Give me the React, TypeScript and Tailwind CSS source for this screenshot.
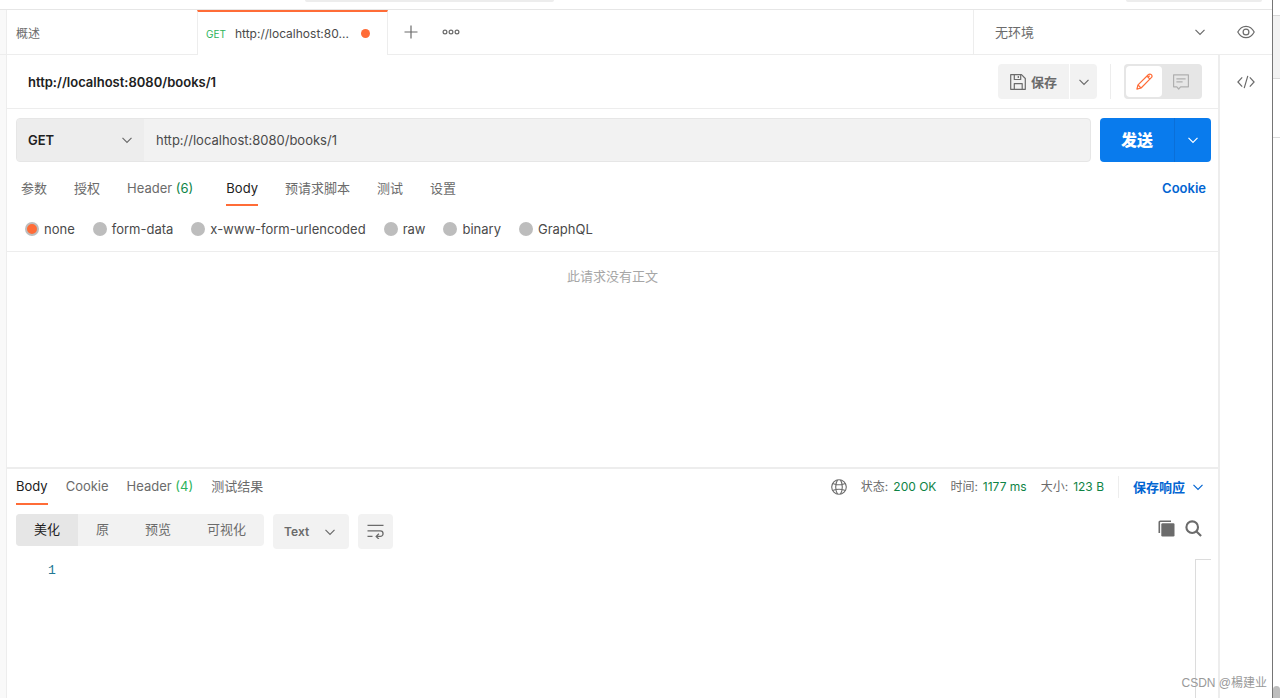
import { useState } from "react";
import type { ReactNode } from "react";

type IconProps = { className?: string };

function Chevron({ className }: IconProps) {
  return (
    <svg className={className} width="12" height="12" viewBox="0 0 12 12" fill="none" stroke="currentColor" strokeWidth="1.2" aria-hidden="true">
      <path d="M1.5 3.8 6 8.3l4.5-4.5" />
    </svg>
  );
}

function PlusIcon() {
  return (
    <svg width="14" height="14" viewBox="0 0 14 14" fill="none" stroke="currentColor" strokeWidth="1.2" aria-hidden="true">
      <path d="M7 .5v13M.5 7h13" />
    </svg>
  );
}

function MoreIcon() {
  return (
    <svg width="18" height="6" viewBox="0 0 18 6" fill="none" stroke="currentColor" strokeWidth="1.2" aria-hidden="true">
      <circle cx="3" cy="3" r="1.9" />
      <circle cx="9" cy="3" r="1.9" />
      <circle cx="15" cy="3" r="1.9" />
    </svg>
  );
}

function EyeIcon() {
  return (
    <svg width="18" height="14" viewBox="0 0 18 14" fill="none" stroke="currentColor" strokeWidth="1.2" aria-hidden="true">
      <path d="M.8 7C2.8 3.200 5.700 1.300 9 1.300S15.200 3.200 17.200 7C15.200 10.800 12.300 12.700 9 12.700S2.800 10.800.8 7Z" />
      <circle cx="9" cy="7" r="2.9" />
    </svg>
  );
}

function SaveIcon() {
  return (
    <svg width="16" height="16" viewBox="0 0 16 16" fill="none" stroke="currentColor" strokeWidth="1.2" strokeLinejoin="round" aria-hidden="true">
      <path d="M.7.7h10.800l3.800 3.800v10.800H.7Z" />
      <path d="M4.300.7v4.800h6.400V.7M8.300 2v2M4.300 15.300V9.600h7.900v5.700" />
    </svg>
  );
}

function PencilIcon() {
  return (
    <svg width="17" height="17" viewBox="0 0 17 17" fill="none" stroke="currentColor" strokeWidth="1.2" strokeLinejoin="round" aria-hidden="true">
      <path d="M.9 16.100 2 11.900 12.300 1.700a2.100 2.100 0 0 1 3 3L5.100 15Z" />
      <path d="m10.900 3.100 3 3M12.400 4.600a1.500 1.500 0 0 1 1.600-1.600M2 12l3 3" />
    </svg>
  );
}

function CommentIcon() {
  return (
    <svg width="16" height="16" viewBox="0 0 16 16" fill="none" stroke="currentColor" strokeWidth="1.2" strokeLinejoin="round" aria-hidden="true">
      <path d="M.6.8h14.800v12H7.600L5.700 15l-1.900-2.200H.6Z" />
      <path d="M3.400 4.800h9.200M3.400 7.800h6.200" />
    </svg>
  );
}

function CodeIcon() {
  return (
    <svg width="18" height="14" viewBox="0 0 18 14" fill="none" stroke="currentColor" strokeWidth="1.2" aria-hidden="true">
      <path d="M5.200 2.300.9 7l4.300 4.700M12.800 2.300 17.100 7l-4.300 4.700M10.800.8 7.200 13.200" />
    </svg>
  );
}

function GlobeIcon() {
  return (
    <svg width="16" height="16" viewBox="0 0 16 16" fill="none" stroke="currentColor" strokeWidth="1.1" aria-hidden="true">
      <circle cx="8" cy="8" r="7.300" />
      <path d="M6.500.9C4.100 5 4.100 11 6.500 15.100M9.500.9C11.900 5 11.900 11 9.500 15.100M1.600 4.500C5.500 6 10.500 6 14.400 4.500M1.600 11.500C5.500 10 10.500 10 14.400 11.500" />
    </svg>
  );
}

function WrapIcon() {
  return (
    <svg width="17" height="15" viewBox="0 0 17 15" fill="none" stroke="currentColor" strokeWidth="1.300" aria-hidden="true">
      <path d="M.5 1.300h16M.5 6.900h12.800a2.700 2.700 0 0 1 0 5.500H9.500M.5 12.400h5M11.900 9.700l-2.700 2.700 2.700 2.700" />
    </svg>
  );
}

function CopyIcon() {
  return (
    <svg width="17" height="17" viewBox="0 0 17 17" fill="none" aria-hidden="true">
      <path d="M1.300 13V2.200a1 1 0 0 1 1-1H13" stroke="currentColor" strokeWidth="1.600" />
      <rect x="3.300" y="3.300" width="13.200" height="13.200" rx="1.200" fill="currentColor" />
    </svg>
  );
}

function SearchIcon() {
  return (
    <svg width="17" height="17" viewBox="0 0 17 17" fill="none" stroke="currentColor" strokeWidth="2.100" aria-hidden="true">
      <circle cx="7.200" cy="7.200" r="5.800" />
      <path d="m11.500 11.500 4.600 4.600" />
    </svg>
  );
}

function Tab({ active, onClick, children }: { active: boolean; onClick: () => void; children: ReactNode }) {
  return (
    <button
      type="button"
      role="tab"
      aria-selected={active}
      onClick={onClick}
      className={
        active
          ? "h-full border-b-2 border-[#ff6c37] text-[#212121]"
          : "h-full border-b-2 border-transparent text-[#6b6b6b]"
      }
    >
      {children}
    </button>
  );
}

const requestTabs = [
  { name: "参数" },
  { name: "授权" },
  { name: "Header", count: 6 },
  { name: "Body" },
  { name: "预请求脚本" },
  { name: "测试" },
  { name: "设置" },
];
const responseTabs = [{ name: "Body" }, { name: "Cookie" }, { name: "Header", count: 4 }, { name: "测试结果" }];
const bodyTypes = ["none", "form-data", "x-www-form-urlencoded", "raw", "binary", "GraphQL"];
const views = ["美化", "原", "预览", "可视化"];
const stats = [
  { label: "状态:", value: "200 OK" },
  { label: "时间:", value: "1177 ms" },
  { label: "大小:", value: "123 B" },
];

function TabBar() {
  return (
    <header className="flex h-[45px] text-[12px]">
      <a href="#overview" className="flex w-[190px] items-center border-b border-[#ededed] px-[9px] pt-[3px] text-[#6b6b6b]">
        概述
      </a>
      <a href="#request" className="flex w-[191px] items-center gap-[9px] border-x border-t-2 border-x-[#ededed] border-t-[#ff6c37] pr-[17px] pl-2">
        <span className="text-[10px] text-[#2cb35a]">GET</span>
        <span className="flex-1 whitespace-nowrap text-[#4a4a4a]">http://localhost:80...</span>
        <span className="size-[9px] shrink-0 rounded-full bg-[#ff6c37]" />
      </a>
      <div className="flex flex-1 items-center gap-6 border-b border-[#ededed] px-4 text-[#6b6b6b]">
        <button type="button" aria-label="新建标签">
          <PlusIcon />
        </button>
        <button type="button" aria-label="更多">
          <MoreIcon />
        </button>
      </div>
      <div className="relative flex w-[247px] items-center border-b border-l border-[#ededed] text-[#6b6b6b]">
        <select aria-label="环境" className="h-full w-full appearance-none bg-transparent pl-[21px] text-[13px] outline-none">
          <option>无环境</option>
        </select>
        <Chevron className="pointer-events-none absolute right-[14px]" />
      </div>
      <div className="flex w-[52px] items-center justify-center border-b border-[#ededed] text-[#6b6b6b]">
        <button type="button" aria-label="查看环境">
          <EyeIcon />
        </button>
      </div>
    </header>
  );
}

function TitleRow() {
  return (
    <div className="flex h-[54px] items-center border-b border-[#ededed] pr-4 pl-[21px] text-[#6b6b6b]">
      <h1 className="flex-1 font-semibold text-[#212121]">http://localhost:8080/books/1</h1>
      <button type="button" className="flex h-[35px] items-center gap-[5px] rounded-l bg-[#f2f2f2] px-3 font-bold">
        <SaveIcon />
        保存
      </button>
      <button type="button" aria-label="保存选项" className="ml-px flex h-[35px] w-[27px] items-center justify-center rounded-r bg-[#f2f2f2]">
        <Chevron />
      </button>
      <div className="mx-[13px] h-[35px] w-px bg-[#ededed]" />
      <div className="flex rounded bg-[#e6e6e6] p-[2px]">
        <button type="button" aria-label="编辑" className="flex h-[31px] w-9 items-center justify-center rounded bg-white text-[#ff6c37]">
          <PencilIcon />
        </button>
        <button type="button" aria-label="评论" className="flex h-[31px] w-[38px] items-center justify-center text-[#b0b0b0]">
          <CommentIcon />
        </button>
      </div>
    </div>
  );
}

function UrlRow() {
  return (
    <form className="flex gap-[9px] pt-[9px] pr-[7px] pl-[9px]" onSubmit={(e) => e.preventDefault()}>
      <div className="flex h-11 flex-1 overflow-hidden rounded border border-[#e6e6e6] bg-[#f2f2f2]">
        <div className="relative flex w-[127px] items-center bg-[#ededed]">
          <select aria-label="请求方法" className="h-full w-full appearance-none bg-transparent pl-[11px] font-semibold text-[#212121] outline-none">
            <option>GET</option>
            <option>POST</option>
            <option>PUT</option>
            <option>DELETE</option>
          </select>
          <Chevron className="pointer-events-none absolute right-[11px] text-[#6b6b6b]" />
        </div>
        <input aria-label="请求地址" type="text" defaultValue="http://localhost:8080/books/1" className="min-w-0 flex-1 bg-transparent px-3 text-[#4a4a4a] outline-none" />
      </div>
      <div className="flex h-11 overflow-hidden rounded bg-[#097bed] text-white">
        <button type="submit" className="w-[74px] text-[16px] font-black">
          发送
        </button>
        <button type="button" aria-label="发送选项" className="flex w-[37px] items-center justify-center border-l border-[#0a6fd8]">
          <Chevron />
        </button>
      </div>
    </form>
  );
}

export default function App() {
  const [requestTab, setRequestTab] = useState("Body");
  const [responseTab, setResponseTab] = useState("Body");
  const [bodyType, setBodyType] = useState("none");
  const [view, setView] = useState("美化");

  return (
    <div className="relative flex min-h-screen overflow-hidden bg-white font-['Inter','Noto_Sans_CJK_SC',sans-serif] text-[13px] leading-5">
      <div className="flex min-w-0 flex-1 flex-col border-r border-[#757575]">
        <div className="flex h-[10px] items-start justify-between border-b border-[#e6e6e6] pr-[10px] pl-[305px]">
          <div className="h-[2px] w-[249px] rounded-b bg-[#ededed]" />
          <div className="h-[2px] w-[136px] rounded-b bg-[#ededed]" />
        </div>
        <div className="flex flex-1">
          <div className="w-[7px] border-r border-[#ededed] bg-[#f9f9f9]">
            <div className="h-[45px] border-b border-[#ededed]" />
          </div>
          <div className="flex min-w-0 flex-1 flex-col">
            <TabBar />
            <div className="flex flex-1">
              <main className="flex min-w-0 flex-1 flex-col border-r-2 border-[#ededed]">
                <TitleRow />
                <UrlRow />
                <div className="flex h-11 items-stretch justify-between pr-3 pl-[14px]">
                  <div role="tablist" aria-label="请求" className="flex gap-[27px]">
                    {requestTabs.map((tab) => (
                      <Tab key={tab.name} active={requestTab === tab.name} onClick={() => setRequestTab(tab.name)}>
                        <span className={tab.count ? "block pt-[10px] pr-[6px]" : "block pt-[10px]"}>
                          {tab.name}
                          {tab.count && <span className="text-[#0e8345]"> ({tab.count})</span>}
                        </span>
                      </Tab>
                    ))}
                  </div>
                  <a href="#cookies" className="self-center pt-2 font-semibold text-[#0265d2]">
                    Cookie
                  </a>
                </div>
                <div role="radiogroup" aria-label="正文类型" className="flex h-[46px] items-center gap-[18px] border-b border-[#ededed] pl-[18px] text-[#4a4a4a]">
                  {bodyTypes.map((type) => (
                    <label key={type} className="flex items-center gap-[5px]">
                      <input
                        type="radio"
                        name="body-type"
                        checked={bodyType === type}
                        onChange={() => setBodyType(type)}
                        className="size-[14px] appearance-none rounded-full border-2 border-[#bdbdbd] bg-[#bdbdbd] checked:bg-[#ff6c37]"
                      />
                      {type}
                    </label>
                  ))}
                </div>
                <p className="min-h-[215px] pt-[14px] text-center text-[#a6a6a6]">此请求没有正文</p>

                <section className="flex flex-1 flex-col border-t-2 border-[#ededed]">
                  <div className="flex h-9 justify-between pr-[14px] pl-[9px]">
                    <div role="tablist" aria-label="响应" className="flex gap-[18px]">
                      {responseTabs.map((tab) => (
                        <Tab key={tab.name} active={responseTab === tab.name} onClick={() => setResponseTab(tab.name)}>
                          {tab.name}
                          {tab.count && <span className="text-[#2cb35a]"> ({tab.count})</span>}
                        </Tab>
                      ))}
                    </div>
                    <div className="flex items-center gap-[14px] text-[12px] text-[#6b6b6b]">
                      <GlobeIcon />
                      {stats.map((stat) => (
                        <span key={stat.label} className="flex gap-[5px]">
                          <span>{stat.label}</span>
                          <span className="text-[#0e8345]">{stat.value}</span>
                        </span>
                      ))}
                      <div className="h-[22px] w-px bg-[#ededed]" />
                      <button type="button" className="flex items-center gap-[7px] text-[13px] font-bold text-[#0265d2]">
                        保存响应
                        <Chevron />
                      </button>
                    </div>
                  </div>
                  <div className="flex items-start gap-[9px] pt-[9px] pr-4 pl-[9px] text-[#6b6b6b]">
                    <div className="flex h-8 overflow-hidden rounded bg-[#f2f2f2]">
                      {views.map((name) => (
                        <button
                          key={name}
                          type="button"
                          aria-pressed={view === name}
                          onClick={() => setView(name)}
                          className={view === name ? "bg-[#e6e6e6] px-[18px] pb-[2px] text-[#212121]" : "px-[18px] pb-[2px]"}
                        >
                          {name}
                        </button>
                      ))}
                    </div>
                    <div className="relative flex h-[35px] w-[76px] items-center rounded bg-[#f2f2f2]">
                      <select aria-label="格式" className="h-full w-full appearance-none bg-transparent pl-[11px] text-[12px] font-semibold outline-none">
                        <option>Text</option>
                        <option>JSON</option>
                      </select>
                      <Chevron className="pointer-events-none absolute right-[13px]" />
                    </div>
                    <button type="button" aria-label="自动换行" className="flex size-[35px] items-center justify-center rounded bg-[#f2f2f2]">
                      <WrapIcon />
                    </button>
                    <div className="ml-auto flex gap-[10px] pt-[6px]">
                      <button type="button" aria-label="复制">
                        <CopyIcon />
                      </button>
                      <button type="button" aria-label="搜索">
                        <SearchIcon />
                      </button>
                    </div>
                  </div>
                  <div className="mt-[10px] flex flex-1 justify-between pr-[7px] pl-[41px]">
                    <code className="pt-[2px] font-['Liberation_Mono',monospace] text-[13px] text-[#237893]">1</code>
                    <div className="w-4 border-t border-l border-[#dcdcdc]" />
                  </div>
                </section>
              </main>
              <aside className="flex w-[52px] flex-col items-center pt-5 text-[#6b6b6b]">
                <button type="button" aria-label="代码">
                  <CodeIcon />
                </button>
              </aside>
            </div>
          </div>
        </div>
      </div>
      <div className="flex w-[7px] flex-col pt-[15px]">
        <div className="h-16 border-y border-[#d9d9d9] bg-[#f2f2f2]" />
        <div className="mt-[58px] h-px bg-[#dcdcdc]" />
        <div className="mt-auto h-3 rounded-t-full bg-[#bdbdbd]" />
      </div>
      <div className="absolute right-[13px] bottom-[5px] font-['Liberation_Sans','Noto_Sans_CJK_SC',sans-serif] text-[12px] text-[#999999]">
        CSDN @楊建业
      </div>
    </div>
  );
}
